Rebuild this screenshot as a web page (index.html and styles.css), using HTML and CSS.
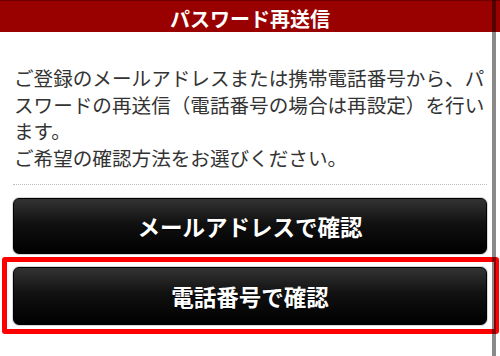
FILE: index.html
```html
<!DOCTYPE html>
<html lang="ja">
<head>
<meta charset="utf-8">
<link rel="stylesheet" href="styles.css">
</head>
<body>
<header class="title-bar">
  <h1 class="title">パスワード再送信</h1>
</header>
<main class="content">
  <p class="lead">ご登録のメールアドレスまたは携帯電話番号から、パスワードの再送信（電話番号の場合は再設定）を行います。<br>ご希望の確認方法をお選びください。</p>
  <div class="actions">
    <button class="btn" type="button">メールアドレスで確認</button>
    <div class="highlight">
      <button class="btn btn-tel" type="button">電話番号で確認</button>
    </div>
  </div>
</main>
<div class="scrollbar"></div>
</body>
</html>
```

FILE: styles.css
```css
html, body {
  margin: 0;
  padding: 0;
  background: #fff;
}
body {
  width: 500px;
  height: 356px;
  overflow: hidden;
  font-family: "Noto Sans CJK JP", "Noto Sans", sans-serif;
}
.title-bar {
  height: 31px;
  background: #990000;
  border-top: 1px solid #6e0000;
  display: flex;
  align-items: center;
  justify-content: center;
}
.title {
  margin: 0;
  font-size: 20px;
  font-weight: 700;
  color: #fff;
  line-height: 31px;
  padding-top: 3px;
  letter-spacing: 0;
}
.content {
  padding: 0 13px;
}
.lead {
  margin: 0;
  padding: 33px 0 12px 1px;
  font-size: 19.6px;
  line-height: 26.7px;
  color: #333;
  border-bottom: 1px dotted #bbb;
}
.actions {
  display: flex;
  flex-direction: column;
  padding-top: 13px;
}
.btn {
  display: block;
  width: 100%;
  height: 56px;
  margin: 0;
  padding: 0;
  border: 1px solid #000;
  border-radius: 6px;
  background: linear-gradient(#333 0%, #111 45%, #000 100%);
  box-shadow: 0 0 0 1px #d8d8d8;
  color: #fff;
  font-family: "Noto Sans CJK JP", "Noto Sans", sans-serif;
  font-size: 22.5px;
  font-weight: 700;
  text-shadow: 0 1px 1px #000;
}
.highlight {
  position: relative;
  margin-top: 13px;
}
.btn-tel {
  height: 58px;
}
.highlight::after {
  content: "";
  position: absolute;
  top: -10px;
  left: -11px;
  right: -12px;
  bottom: -9px;
  border: 5px solid #f00;
  border-radius: 3px;
  pointer-events: none;
}
.scrollbar {
  position: fixed;
  top: 0;
  right: 4px;
  width: 4px;
  height: 356px;
  background: rgba(0, 0, 0, 0.46);
}
```
